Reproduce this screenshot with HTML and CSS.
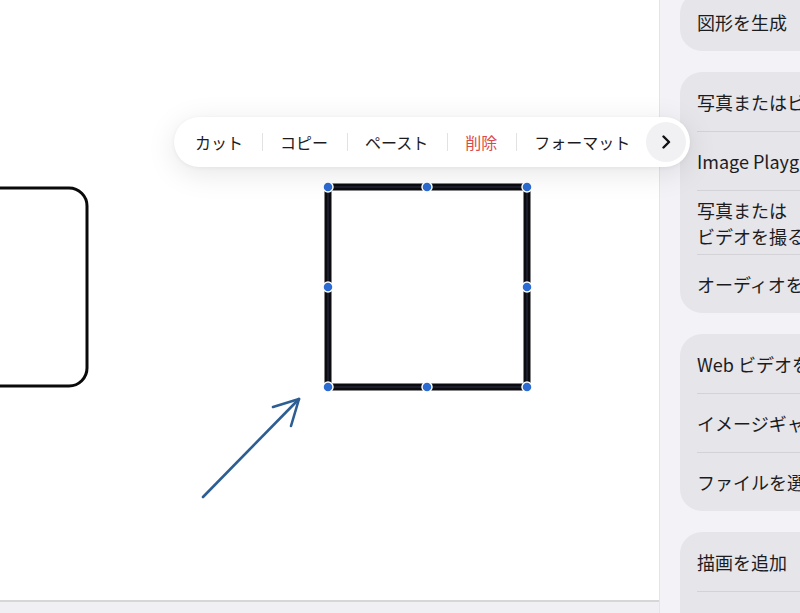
FILE: index.html
```html
<!DOCTYPE html>
<html lang="ja">
  <head>
    <meta charset="UTF-8" />
    <meta name="viewport" content="width=device-width, initial-scale=1.0" />
    <title>キャンバス</title>
    <link rel="stylesheet" href="styles.css">
  </head>
  <body>
    <div class="workspace">
      <main class="canvas">
        <svg class="board" width="660" height="600" viewBox="0 0 660 600">
          <!-- rounded box, partly off the left edge -->
          <rect x="-120" y="188" width="207" height="198" rx="18" fill="none" stroke="#0a0a0a" stroke-width="3" />

          <!-- selected square -->
          <rect x="328" y="187" width="199" height="200" fill="none" stroke="#0b0b10" stroke-width="7" />
          <rect x="328" y="187" width="199" height="200" fill="none" stroke="#1b1d2b" stroke-width="2" />
          <g class="handles">
            <circle cx="328" cy="187" r="5" />
            <circle cx="427" cy="187" r="5" />
            <circle cx="527" cy="187" r="5" />
            <circle cx="328" cy="287" r="5" />
            <circle cx="527" cy="287" r="5" />
            <circle cx="328" cy="387" r="5" />
            <circle cx="427" cy="387" r="5" />
            <circle cx="527" cy="387" r="5" />
          </g>

          <!-- arrow -->
          <g stroke="#2d5e93" stroke-width="2.6" stroke-linecap="round" fill="none">
            <line x1="203" y1="497" x2="299" y2="399" />
            <polyline points="273,407 299,399 291,426" stroke-linejoin="round" />
          </g>
        </svg>
        <div class="canvas-foot"></div>
      </main>

      <aside class="sidebar">
        <div class="group first">
          <div class="row">図形を生成</div>
        </div>
        <div class="group">
          <div class="row">写真またはビデオを選択</div>
          <div class="row">Image Playground</div>
          <div class="row two">写真または<br />ビデオを撮る</div>
          <div class="row">オーディオを録音</div>
        </div>
        <div class="group">
          <div class="row">Web ビデオを挿入</div>
          <div class="row">イメージギャラリー</div>
          <div class="row">ファイルを選択</div>
        </div>
        <div class="group">
          <div class="row">描画を追加</div>
          <div class="row">方程式を挿入</div>
        </div>
      </aside>

      <nav class="edit-menu">
        <button class="menu-item">カット</button>
        <span class="sep"></span>
        <button class="menu-item">コピー</button>
        <span class="sep"></span>
        <button class="menu-item">ペースト</button>
        <span class="sep"></span>
        <button class="menu-item danger">削除</button>
        <span class="sep"></span>
        <button class="menu-item last">フォーマット</button>
        <button class="menu-more">
          <svg width="14" height="14" viewBox="0 0 14 14">
            <polyline points="4.5,1.5 10,7 4.5,12.5" fill="none" stroke="#111" stroke-width="2.4" stroke-linecap="round" stroke-linejoin="round" />
          </svg>
        </button>
      </nav>
    </div>
  </body>
</html>
```

FILE: styles.css
```css
body {
  margin: 0;
  font-family: "Noto Sans CJK JP", "Noto Sans", sans-serif;
  color: #1c1c1e;
  background: #f2f2f7;
  overflow: hidden;
}

.workspace {
  position: relative;
  display: flex;
  width: 800px;
  height: 613px;
}

.canvas {
  width: 659px;
  display: flex;
  flex-direction: column;
  background: #fff;
  border-right: 1px solid #cdeff1;
}

.board {
  display: block;
}

.handles circle {
  fill: #2c6bd1;
  stroke: #fff;
  stroke-width: 1.5;
}

.canvas-foot {
  flex: 1;
  border-top: 2px solid #d6d6d8;
  background: #f0f0f4;
}

.sidebar {
  flex: 1;
  display: flex;
  flex-direction: column;
  gap: 21px;
  padding-left: 20px;
  overflow: hidden;
}

.group {
  background: #e5e5ea;
  border-radius: 22px 0 0 22px;
  padding-left: 17px;
}

.group.first {
  margin-top: -8px;
}

.row {
  box-sizing: border-box;
  height: 59px;
  display: flex;
  align-items: center;
  font-size: 18px;
  white-space: nowrap;
  border-top: 1px solid #d2d2d7;
}

.row:first-child {
  border-top: none;
}

.row.two {
  height: 64px;
  line-height: 26px;
}

.edit-menu {
  position: absolute;
  left: 174px;
  top: 117px;
  height: 50px;
  width: 516px;
  box-sizing: border-box;
  padding: 0 4px 0 4px;
  display: flex;
  align-items: center;
  background: #fff;
  border-radius: 25px;
  box-shadow: 0 6px 30px rgba(0, 0, 0, 0.10), 0 1px 4px rgba(0, 0, 0, 0.05);
}

.menu-item {
  flex-shrink: 0;
  white-space: nowrap;
  font-family: inherit;
  font-size: 16px;
  color: #1c1c1e;
  background: none;
  border: none;
  padding: 0 19px 0 17px;
  height: 40px;
}

.menu-item.last {
  padding-right: 0;
}

.menu-item.danger {
  color: #db4a4a;
}

.sep {
  flex-shrink: 0;
  width: 1px;
  height: 18px;
  background: #e2e2e4;
}

.menu-more {
  flex-shrink: 0;
  margin-left: auto;
  width: 40px;
  height: 40px;
  border-radius: 50%;
  border: none;
  background: #f1f1f3;
  display: flex;
  align-items: center;
  justify-content: center;
  padding: 0;
}
```
